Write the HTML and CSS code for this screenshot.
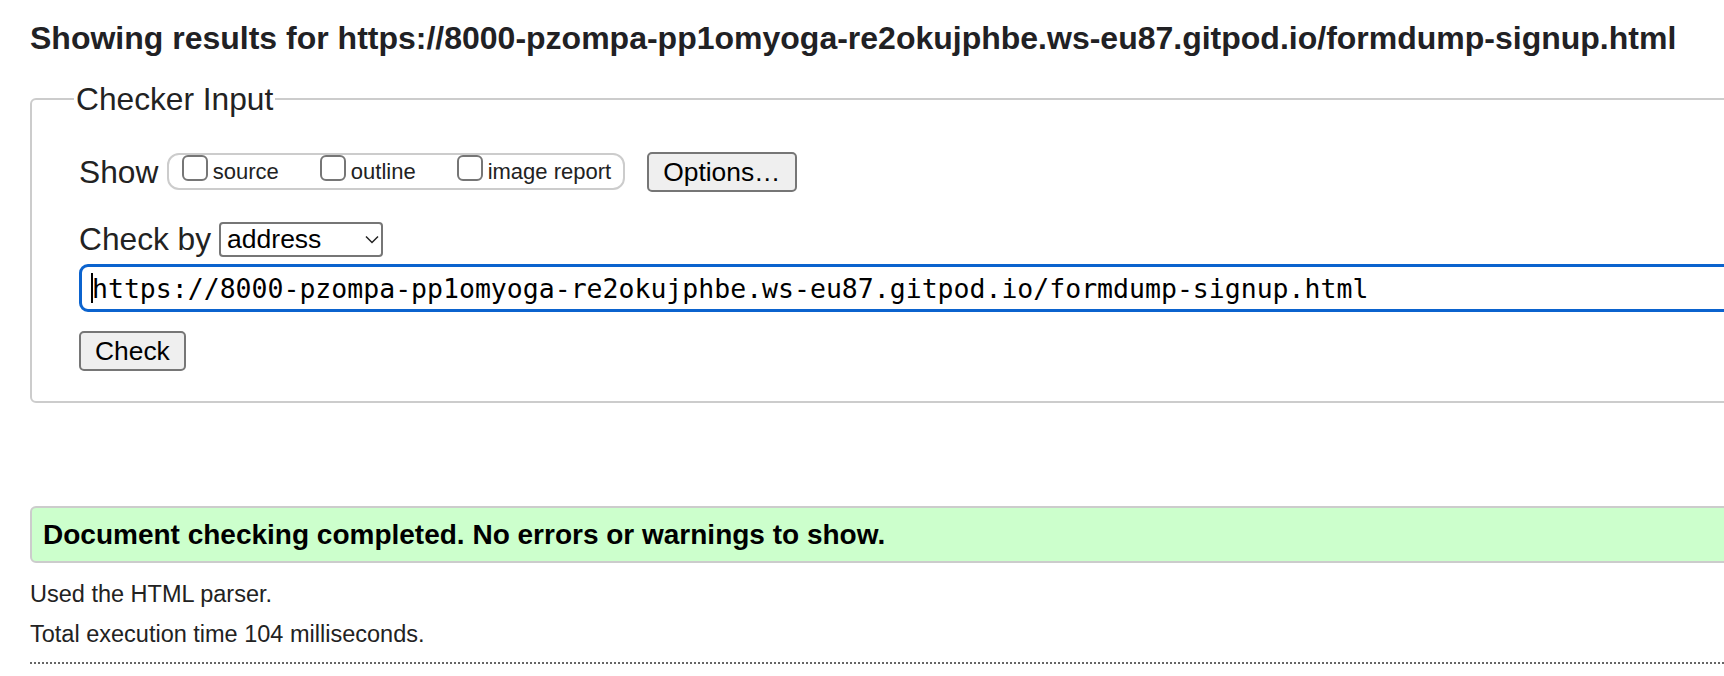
FILE: index.html
```html
<!DOCTYPE html>
<html lang="en">
<head>
<meta charset="utf-8">
<title>Showing results - Nu Html Checker</title>
<link rel="stylesheet" href="styles.css">
</head>
<body>
<div class="page">
  <h2 class="title">Showing results for https://8000-pzompa-pp1omyoga-re2okujphbe.ws-eu87.gitpod.io/formdump-signup.html</h2>

  <fieldset class="checker">
    <legend class="legend">Checker Input</legend>

    <div class="row row-show">
      <span class="lbl">Show</span>
      <div class="opts">
        <label class="opt"><input type="checkbox" class="cb"><span class="opt-text">source</span></label>
        <label class="opt"><input type="checkbox" class="cb"><span class="opt-text">outline</span></label>
        <label class="opt"><input type="checkbox" class="cb"><span class="opt-text">image report</span></label>
      </div>
      <button class="btn btn-options" type="button">Options…</button>
    </div>

    <div class="row row-by">
      <span class="lbl lbl-by">Check by</span>
      <div class="select">
        <span>address</span>
        <svg class="chev" width="14" height="9" viewBox="0 0 14 9"><path d="M1 1.5 L7 7.5 L13 1.5" fill="none" stroke="#222" stroke-width="1.5"/></svg>
      </div>
    </div>

    <div class="url-field"><span class="caret"></span><span class="url-text">https://8000-pzompa-pp1omyoga-re2okujphbe.ws-eu87.gitpod.io/formdump-signup.html</span></div>

    <button class="btn btn-check" type="button">Check</button>
  </fieldset>

  <div class="status">Document checking completed. No errors or warnings to show.</div>

  <p class="info info-first">Used the HTML parser.</p>
  <p class="info info-second">Total execution time 104 milliseconds.</p>
  <div class="dots"></div>
</div>
</body>
</html>
```

FILE: styles.css
```css
html, body {
  margin: 0;
  padding: 0;
  overflow: hidden;
  background: #fff;
}

body {
  font-family: "Liberation Sans", Arial, sans-serif;
  color: #222;
}

.page {
  width: 1800px;
  padding-left: 30px;
  box-sizing: border-box;
}

.title {
  font-size: 32px;
  font-weight: 700;
  line-height: 37px;
  margin: 20px 0 0;
  color: #212124;
  white-space: nowrap;
}

.checker {
  margin: 24px 0 0;
  padding: 0 0 30px 47px;
  border: 2px solid #ccc;
  border-radius: 6px;
  min-width: 0;
}

.legend {
  font-size: 31.7px;
  line-height: 36px;
  padding: 0 2px;
  margin-left: -5px;
  color: #222;
}

.row {
  display: flex;
  align-items: center;
}

.row-show {
  height: 40px;
  margin-top: 35px;
}

.lbl {
  font-size: 31.7px;
  line-height: 36px;
  margin-right: 9px;
  color: #222;
}

.lbl-by {
  margin-right: 8px;
}

.opts {
  display: flex;
  align-items: flex-start;
  height: 37px;
  box-sizing: border-box;
  border: 2px solid #ccc;
  border-radius: 12px;
  padding: 0 12px 0 12.5px;
  margin-top: -2px;
}

.opt {
  display: flex;
  align-items: flex-end;
}

.opt + .opt {
  margin-left: 41px;
}

.cb {
  -webkit-appearance: none;
  appearance: none;
  width: 26px;
  height: 26px;
  box-sizing: border-box;
  border: 2px solid #767676;
  border-radius: 6px;
  background: #fff;
  margin: 0 5px 0 0;
}

.opt-text {
  font-size: 22px;
  line-height: 22px;
  color: #222;
  position: relative;
  top: 2px;
}

.btn {
  font-family: "Liberation Sans", Arial, sans-serif;
  font-size: 26.4px;
  line-height: 1;
  height: 40px;
  padding: 0 14px;
  border: 2px solid #767676;
  border-radius: 5px;
  background: #efefef;
  color: #000;
}

.btn-options {
  margin-left: 22px;
}

.row-by {
  height: 36px;
  margin-top: 29px;
}

.select {
  display: flex;
  align-items: center;
  justify-content: space-between;
  width: 164px;
  height: 35px;
  box-sizing: border-box;
  border: 2px solid #767676;
  border-radius: 4px;
  padding: 0 2px 0 6px;
  font-size: 26.5px;
  color: #000;
}

.chev {
  display: block;
}

.url-field {
  display: flex;
  align-items: center;
  height: 48px;
  box-sizing: border-box;
  margin-top: 7px;
  border: 3px solid #0b63ce;
  border-radius: 9px;
  padding-left: 9px;
  font-family: "DejaVu Sans Mono", "Liberation Mono", monospace;
  font-size: 26.5px;
  color: #000;
  white-space: nowrap;
  overflow: hidden;
}

.caret {
  display: block;
  width: 2px;
  height: 30px;
  background: #000;
  margin-right: -1px;
}

.btn-check {
  margin-top: 19px;
  display: block;
}

.status {
  margin-top: 103px;
  display: flex;
  align-items: center;
  height: 57px;
  box-sizing: border-box;
  border: 2px solid #ccc;
  border-radius: 6px;
  background: #ccffcc;
  padding-left: 11px;
  font-weight: 700;
  font-size: 28px;
  color: #000;
}

.info {
  font-size: 23.5px;
  line-height: 27px;
  margin: 0;
  color: #222;
}

.info-first {
  margin-top: 17.5px;
}

.info-second {
  margin-top: 13px;
}

.dots {
  margin-top: 14.5px;
  border-top: 2px dotted #666;
}
```
